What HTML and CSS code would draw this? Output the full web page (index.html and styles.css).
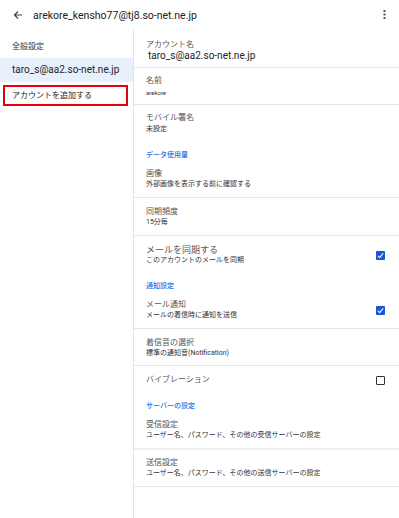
FILE: index.html
```html
<!DOCTYPE html>
<html lang="ja">

<head>
    <meta charset="UTF-8">
    <meta name="viewport" content="width=device-width, initial-scale=1.0">
    <title>アカウント設定</title>
    <link rel="stylesheet" href="styles.css">
</head>

<body>
    <div class="topbar">
        <svg class="back" width="10" height="10" viewBox="0 0 10 10">
            <path d="M9 5H1.5M5 1.5L1.5 5L5 8.5" fill="none" stroke="#444" stroke-width="1.2" />
        </svg>
        <span class="title">arekore_kensho77@tj8.so-net.ne.jp</span>
        <svg class="more" width="3" height="9" viewBox="0 0 3 9">
            <rect x="0.5" y="0" width="2" height="2" fill="#555" />
            <rect x="0.5" y="3.5" width="2" height="2" fill="#555" />
            <rect x="0.5" y="7" width="2" height="2" fill="#555" />
        </svg>
    </div>

    <div class="layout">
        <div class="sidebar">
            <p class="side-head">全般設定</p>
            <p class="side-item selected">taro_s@aa2.so-net.ne.jp</p>
            <p class="side-item add">アカウントを追加する</p>
        </div>

        <div class="main">
            <div class="item account">
                <p class="label">アカウント名</p>
                <p class="value">taro_s@aa2.so-net.ne.jp</p>
            </div>
            <div class="item name">
                <p class="label">名前</p>
                <p class="desc small">arekore</p>
            </div>
            <div class="item plain sig">
                <p class="label">モバイル署名</p>
                <p class="desc">未設定</p>
            </div>

            <p class="section">データ使用量</p>
            <div class="item">
                <div class="text">
                    <p class="label">画像</p>
                    <p class="desc">外部画像を表示する前に確認する</p>
                </div>
            </div>
            <div class="item">
                <div class="text">
                    <p class="label">同期頻度</p>
                    <p class="desc">15分毎</p>
                </div>
            </div>
            <div class="item plain">
                <div class="text">
                    <p class="label big">メールを同期する</p>
                    <p class="desc">このアカウントのメールを同期</p>
                </div>
                <span class="check on"></span>
            </div>

            <p class="section">通知設定</p>
            <div class="item">
                <div class="text">
                    <p class="label">メール通知</p>
                    <p class="desc">メールの着信時に通知を送信</p>
                </div>
                <span class="check on"></span>
            </div>
            <div class="item ring">
                <div class="text">
                    <p class="label">着信音の選択</p>
                    <p class="desc">標準の通知音(Notification)</p>
                </div>
            </div>
            <div class="item plain">
                <div class="text">
                    <p class="label">バイブレーション</p>
                </div>
                <span class="check"></span>
            </div>

            <p class="section">サーバーの設定</p>
            <div class="item thick">
                <div class="text">
                    <p class="label">受信設定</p>
                    <p class="desc">ユーザー名、パスワード、その他の受信サーバーの設定</p>
                </div>
            </div>
            <div class="item out">
                <div class="text">
                    <p class="label">送信設定</p>
                    <p class="desc">ユーザー名、パスワード、その他の送信サーバーの設定</p>
                </div>
            </div>
        </div>
    </div>
</body>

</html>
```

FILE: styles.css
```css
* {
    box-sizing: border-box;
    margin: 0;
    padding: 0;
    font-family: Roboto, "Noto Sans CJK JP", sans-serif;
}

body {
    width: 399px;
    height: 518px;
    background: white;
    color: #333;
    overflow: hidden;
}

.topbar {
    display: flex;
    align-items: center;
    height: 30px;
    padding: 0 13px 0 13px;
}

.back {
    flex-shrink: 0;
}

.title {
    flex: 1;
    margin-left: 10px;
    font-size: 10.5px;
    color: #222;
}

.more {
    margin-top: -1px;
}

.layout {
    display: flex;
    height: 488px;
}

.sidebar {
    width: 134px;
    flex-shrink: 0;
    border-right: 1px solid #e3e3e3;
}

.side-head {
    font-size: 8px;
    line-height: 12px;
    padding: 11px 0 0 12px;
    color: #333;
}

.side-item {
    font-size: 10px;
    color: #222;
}

.selected {
    margin-top: 5px;
    height: 24px;
    line-height: 24px;
    padding-left: 12px;
    background: #e8f0fe;
}

.add {
    margin: 3px 5px 0 3px;
    height: 21px;
    line-height: 17px;
    padding-left: 7px;
    border: 2px solid #e8000b;
    font-size: 8px;
}

.main {
    flex: 1;
}

.item {
    display: flex;
    align-items: center;
    padding: 9px 14px 8px 12px;
    border-bottom: 1px solid #e6e6e6;
}

.item.plain {
    border-bottom: none;
}

.text {
    flex: 1;
}

.label {
    font-size: 8px;
    line-height: 10px;
    color: #555;
}

.label.big {
    font-size: 9px;
}

.desc {
    font-size: 7px;
    line-height: 10px;
    color: #333;
}

.account {
    display: block;
    padding: 10px 12px 5px 12px;
}

.value {
    font-size: 10px;
    line-height: 12px;
    padding-left: 2px;
    color: #222;
}

.name {
    display: block;
    padding: 8px 12px 6px 12px;
}

.small {
    font-size: 6px;
    margin-top: 2px;
}

.sig {
    display: block;
    padding-top: 8px;
}

.sig .desc {
    margin-top: 1px;
}

.section {
    font-size: 7px;
    line-height: 10px;
    padding: 8px 12px 0 12px;
    color: #1a73e8;
    font-weight: 500;
}

.ring {
    padding-bottom: 7px;
}

.thick {
    border-bottom: 2px solid #eeeeee;
}

.out {
    padding-top: 8px;
}

.check {
    width: 9px;
    height: 9px;
    flex-shrink: 0;
    border: 1.5px solid #333;
    border-radius: 1px;
}

.check.on {
    position: relative;
    border: none;
    background: #1a56db;
}

.check.on::after {
    content: "";
    position: absolute;
    left: 3px;
    top: 1px;
    width: 2px;
    height: 5px;
    border-right: 1.3px solid white;
    border-bottom: 1.3px solid white;
    transform: rotate(40deg);
}
```
